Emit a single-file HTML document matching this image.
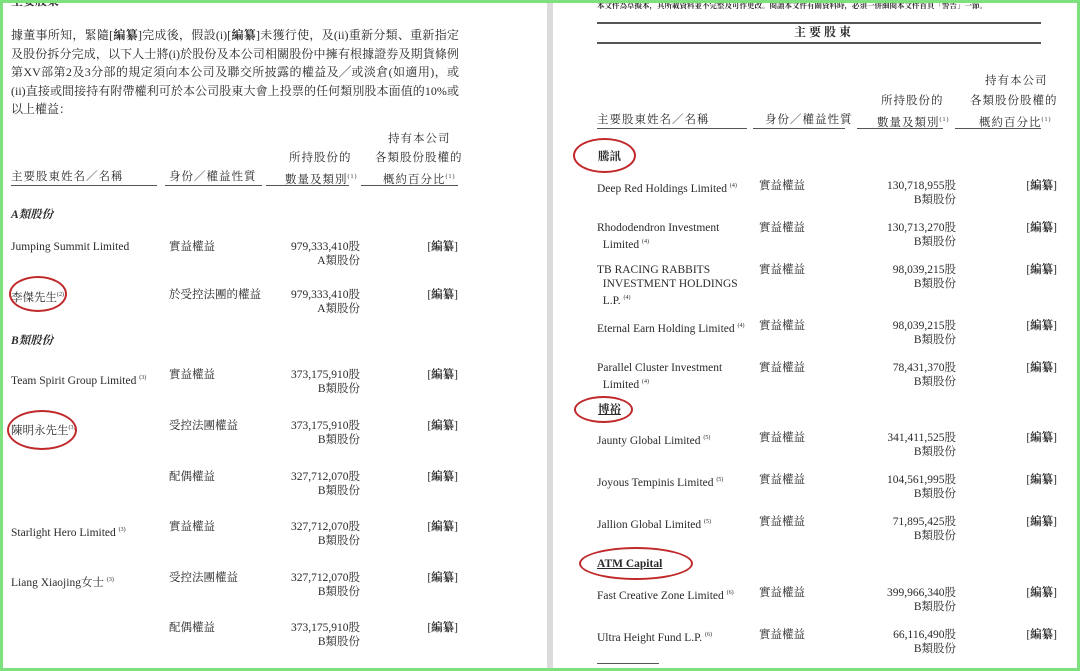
<!DOCTYPE html>
<html><head><meta charset="utf-8"><style>
*{margin:0;padding:0;box-sizing:border-box}
body{width:1080px;height:671px;overflow:hidden;background:#fff;position:relative;font-family:"Liberation Serif","Noto Serif CJK SC","Noto Sans CJK TC",serif;color:#2a2a2a;font-size:11.5px}
.frame{position:absolute;left:0;top:0;width:1080px;height:671px;border:3px solid #7ee07e;pointer-events:none;z-index:5}
.div{position:absolute;left:547px;top:0;width:6px;height:671px;background:#dcdcdc}
.t{position:absolute;white-space:nowrap;line-height:14px}
.h{letter-spacing:1px}
.r{text-align:right}
.ln{position:absolute;height:1px;background:#555}
.pl{position:absolute;left:11px;width:448px;font-size:12px;line-height:16px;text-align:justify;text-align-last:justify;white-space:nowrap}
.e{position:absolute;border:2px solid #c0282a;border-radius:50%;z-index:4}
sup{font-size:6px}
b{font-weight:bold}
i{font-style:italic;font-weight:bold}
</style></head><body>
<div class="div"></div>
<div class="t" style="left:11px;top:-6px;font-size:12px;font-weight:bold">主要股東</div>
<div class="pl" style="top:27px">據董事所知，緊隨[<b>編纂</b>]完成後，假設(i)[<b>編纂</b>]未獲行使，及(ii)重新分類、重新指定</div>
<div class="pl" style="top:46px">及股份拆分完成，以下人士將(i)於股份及本公司相關股份中擁有根據證券及期貨條例</div>
<div class="pl" style="top:64px">第XV部第2及3分部的規定須向本公司及聯交所披露的權益及╱或淡倉(如適用)，或</div>
<div class="pl" style="top:83px">(ii)直接或間接持有附帶權利可於本公司股東大會上投票的任何類別股本面值的10%或</div>
<div class="pl" style="top:101px;text-align-last:left">以上權益：</div>
<!-- left header -->
<div class="t h" style="left:388px;top:132px">持有本公司</div>
<div class="t h" style="left:289px;top:151px">所持股份的</div>
<div class="t h" style="left:375px;top:151px">各類股份股權的</div>
<div class="t h" style="left:11px;top:170px">主要股東姓名／名稱</div>
<div class="t h" style="left:169px;top:170px">身份／權益性質</div>
<div class="t h" style="left:285px;top:170px">數量及類別<sup>(1)</sup></div>
<div class="t h" style="left:383px;top:170px">概約百分比<sup>(1)</sup></div>
<div class="ln" style="left:11px;top:185px;width:146px"></div>
<div class="ln" style="left:165px;top:185px;width:97px"></div>
<div class="ln" style="left:266px;top:185px;width:83px"></div>
<div class="ln" style="left:361px;top:185px;width:97px"></div>
<div class="t" style="left:11px;top:208px"><i>A類股份</i></div>
<div class="t" style="left:11px;top:240px">Jumping Summit Limited</div>
<div class="t" style="left:169px;top:240px">實益權益</div>
<div class="t r" style="left:260px;top:240px;width:100px">979,333,410股<br>A類股份</div>
<div class="t r" style="left:400px;top:240px;width:58px">[<b>編纂</b>]</div>
<div class="t" style="left:11px;top:288px">李傑先生<sup>(2)</sup></div>
<div class="t" style="left:169px;top:288px">於受控法團的權益</div>
<div class="t r" style="left:260px;top:288px;width:100px">979,333,410股<br>A類股份</div>
<div class="t r" style="left:400px;top:288px;width:58px">[<b>編纂</b>]</div>
<div class="t" style="left:11px;top:334px"><i>B類股份</i></div>
<div class="t" style="left:11px;top:371px">Team Spirit Group Limited <sup>(3)</sup></div>
<div class="t" style="left:169px;top:368px">實益權益</div>
<div class="t r" style="left:260px;top:368px;width:100px">373,175,910股<br>B類股份</div>
<div class="t r" style="left:400px;top:368px;width:58px">[<b>編纂</b>]</div>
<div class="t" style="left:11px;top:421px">陳明永先生<sup>(3)</sup></div>
<div class="t" style="left:169px;top:419px">受控法團權益</div>
<div class="t r" style="left:260px;top:419px;width:100px">373,175,910股<br>B類股份</div>
<div class="t r" style="left:400px;top:419px;width:58px">[<b>編纂</b>]</div>
<div class="t" style="left:169px;top:470px">配偶權益</div>
<div class="t r" style="left:260px;top:470px;width:100px">327,712,070股<br>B類股份</div>
<div class="t r" style="left:400px;top:470px;width:58px">[<b>編纂</b>]</div>
<div class="t" style="left:11px;top:523px">Starlight Hero Limited <sup>(3)</sup></div>
<div class="t" style="left:169px;top:520px">實益權益</div>
<div class="t r" style="left:260px;top:520px;width:100px">327,712,070股<br>B類股份</div>
<div class="t r" style="left:400px;top:520px;width:58px">[<b>編纂</b>]</div>
<div class="t" style="left:11px;top:573px">Liang Xiaojing女士 <sup>(3)</sup></div>
<div class="t" style="left:169px;top:571px">受控法團權益</div>
<div class="t r" style="left:260px;top:571px;width:100px">327,712,070股<br>B類股份</div>
<div class="t r" style="left:400px;top:571px;width:58px">[<b>編纂</b>]</div>
<div class="t" style="left:169px;top:621px">配偶權益</div>
<div class="t r" style="left:260px;top:621px;width:100px">373,175,910股<br>B類股份</div>
<div class="t r" style="left:400px;top:621px;width:58px">[<b>編纂</b>]</div>
<!-- right -->
<div class="t" style="left:597px;top:-1px;font-size:7.5px;font-weight:bold">本文件為草擬本，其所載資料並不完整及可作更改。閱讀本文件有關資料時，必須一併細閱本文件首頁「警告」一節。</div>
<div class="ln" style="left:597px;top:22px;width:444px;height:1.5px"></div>
<div class="t" style="left:794px;top:25px;font-size:12px;font-weight:bold;letter-spacing:3px">主要股東</div>
<div class="ln" style="left:597px;top:42px;width:444px;height:1.5px"></div>
<div class="t h" style="left:985px;top:74px">持有本公司</div>
<div class="t h" style="left:881px;top:94px">所持股份的</div>
<div class="t h" style="left:970px;top:94px">各類股份股權的</div>
<div class="t h" style="left:597px;top:113px">主要股東姓名／名稱</div>
<div class="t h" style="left:765px;top:113px">身份／權益性質</div>
<div class="t h" style="left:877px;top:113px">數量及類別<sup>(1)</sup></div>
<div class="t h" style="left:979px;top:113px">概約百分比<sup>(1)</sup></div>
<div class="ln" style="left:597px;top:128px;width:150px"></div>
<div class="ln" style="left:753px;top:128px;width:92px"></div>
<div class="ln" style="left:857px;top:128px;width:86px"></div>
<div class="ln" style="left:955px;top:128px;width:86px"></div>
<div class="t" style="left:598px;top:150px;font-weight:bold">騰訊</div>
<div class="t" style="left:597px;top:179px">Deep Red Holdings Limited <sup>(4)</sup></div>
<div class="t" style="left:759px;top:179px">實益權益</div>
<div class="t r" style="left:856px;top:179px;width:100px">130,718,955股<br>B類股份</div>
<div class="t r" style="left:997px;top:179px;width:60px">[<b>編纂</b>]</div>
<div class="t" style="left:597px;top:221px">Rhododendron Investment<br>&nbsp;&nbsp;Limited <sup>(4)</sup></div>
<div class="t" style="left:759px;top:221px">實益權益</div>
<div class="t r" style="left:856px;top:221px;width:100px">130,713,270股<br>B類股份</div>
<div class="t r" style="left:997px;top:221px;width:60px">[<b>編纂</b>]</div>
<div class="t" style="left:597px;top:263px">TB RACING RABBITS<br>&nbsp;&nbsp;INVESTMENT HOLDINGS<br>&nbsp;&nbsp;L.P. <sup>(4)</sup></div>
<div class="t" style="left:759px;top:263px">實益權益</div>
<div class="t r" style="left:856px;top:263px;width:100px">98,039,215股<br>B類股份</div>
<div class="t r" style="left:997px;top:263px;width:60px">[<b>編纂</b>]</div>
<div class="t" style="left:597px;top:319px">Eternal Earn Holding Limited <sup>(4)</sup></div>
<div class="t" style="left:759px;top:319px">實益權益</div>
<div class="t r" style="left:856px;top:319px;width:100px">98,039,215股<br>B類股份</div>
<div class="t r" style="left:997px;top:319px;width:60px">[<b>編纂</b>]</div>
<div class="t" style="left:597px;top:361px">Parallel Cluster Investment<br>&nbsp;&nbsp;Limited <sup>(4)</sup></div>
<div class="t" style="left:759px;top:361px">實益權益</div>
<div class="t r" style="left:856px;top:361px;width:100px">78,431,370股<br>B類股份</div>
<div class="t r" style="left:997px;top:361px;width:60px">[<b>編纂</b>]</div>
<div class="t" style="left:598px;top:403px;font-weight:bold;text-decoration:underline">博裕</div>
<div class="t" style="left:597px;top:431px">Jaunty Global Limited <sup>(5)</sup></div>
<div class="t" style="left:759px;top:431px">實益權益</div>
<div class="t r" style="left:856px;top:431px;width:100px">341,411,525股<br>B類股份</div>
<div class="t r" style="left:997px;top:431px;width:60px">[<b>編纂</b>]</div>
<div class="t" style="left:597px;top:473px">Joyous Tempinis Limited <sup>(5)</sup></div>
<div class="t" style="left:759px;top:473px">實益權益</div>
<div class="t r" style="left:856px;top:473px;width:100px">104,561,995股<br>B類股份</div>
<div class="t r" style="left:997px;top:473px;width:60px">[<b>編纂</b>]</div>
<div class="t" style="left:597px;top:515px">Jallion Global Limited <sup>(5)</sup></div>
<div class="t" style="left:759px;top:515px">實益權益</div>
<div class="t r" style="left:856px;top:515px;width:100px">71,895,425股<br>B類股份</div>
<div class="t r" style="left:997px;top:515px;width:60px">[<b>編纂</b>]</div>
<div class="t" style="left:597px;top:557px;font-weight:bold;text-decoration:underline">ATM Capital</div>
<div class="t" style="left:597px;top:586px">Fast Creative Zone Limited <sup>(6)</sup></div>
<div class="t" style="left:759px;top:586px">實益權益</div>
<div class="t r" style="left:856px;top:586px;width:100px">399,966,340股<br>B類股份</div>
<div class="t r" style="left:997px;top:586px;width:60px">[<b>編纂</b>]</div>
<div class="t" style="left:597px;top:628px">Ultra Height Fund L.P. <sup>(6)</sup></div>
<div class="t" style="left:759px;top:628px">實益權益</div>
<div class="t r" style="left:856px;top:628px;width:100px">66,116,490股<br>B類股份</div>
<div class="t r" style="left:997px;top:628px;width:60px">[<b>編纂</b>]</div>
<div class="ln" style="left:597px;top:663px;width:62px"></div>
<!-- ellipses -->
<div class="e" style="left:9px;top:276px;width:58px;height:36px"></div>
<div class="e" style="left:7px;top:410px;width:70px;height:40px"></div>
<div class="e" style="left:573px;top:138px;width:63px;height:35px"></div>
<div class="e" style="left:574px;top:396px;width:59px;height:27px"></div>
<div class="e" style="left:579px;top:547px;width:114px;height:33px"></div>
<div class="frame"></div>
</body></html>
